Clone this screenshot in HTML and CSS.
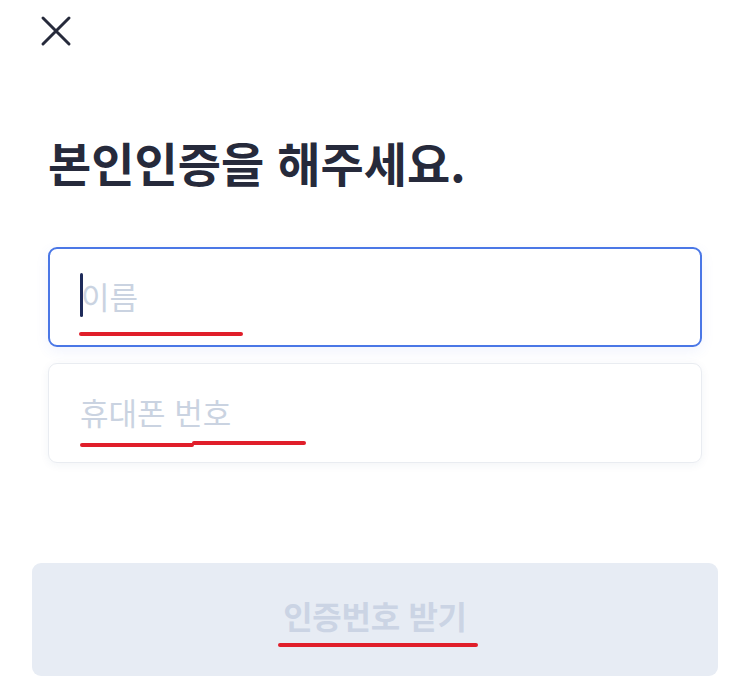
FILE: index.html
```
<!DOCTYPE html>
<html lang="ko">
<head>
    <meta charset="UTF-8">
    <meta name="viewport" content="width=device-width, initial-scale=1.0">
    <title>본인인증</title>
    <link rel="stylesheet" href="styles.css">
</head>
<body>

    <div class="top-bar">
        <button class="close-btn" aria-label="닫기">
            <svg width="32" height="32" viewBox="0 0 32 32">
                <path d="M3 3 L29 29 M29 3 L3 29" stroke="#262a3b" stroke-width="3" stroke-linecap="round" fill="none"/>
            </svg>
        </button>
    </div>

    <div class="content">
        <h1 class="title">본인인증을 해주세요.</h1>

        <div class="field field-active">
            <span class="caret"></span>
            <span class="placeholder">이름</span>
            <span class="mark mark-name"></span>
        </div>

        <div class="field">
            <span class="placeholder">휴대폰 번호</span>
            <span class="mark mark-phone-a"></span>
            <span class="mark mark-phone-b"></span>
        </div>
    </div>

    <div class="bottom">
        <button class="submit-btn">
            인증번호 받기
            <span class="mark mark-btn"></span>
        </button>
    </div>

</body>
</html>
```

FILE: styles.css
```
body {
    margin: 0;
    background: #ffffff;
    font-family: "Noto Sans CJK KR", "Noto Sans", sans-serif;
    color: #262a3b;
}
.top-bar {
    padding: 14px 0 0 39px;
    height: 62px;
}
.close-btn {
    background: none;
    border: none;
    padding: 0;
    width: 34px;
    height: 34px;
    display: flex;
    align-items: center;
    justify-content: center;
}
.content {
    padding: 0 48px;
}
.title {
    margin: 56px 0 0 0;
    font-size: 47px;
    font-weight: 700;
    line-height: 60px;
    letter-spacing: 0;
}
.field {
    position: relative;
    height: 98px;
    border: 1px solid #e9ecf1;
    border-radius: 9px;
    box-shadow: 0 2px 10px rgba(40, 60, 120, 0.06);
    display: flex;
    align-items: center;
    padding-left: 31px;
    margin-top: 16px;
}
.field-active {
    margin-top: 55px;
    border: 2px solid #4a77e6;
    height: 96px;
    padding-left: 30px;
    box-shadow: 0 4px 14px rgba(60, 100, 230, 0.08);
}
.placeholder {
    font-size: 31px;
    color: #cad3e1;
    letter-spacing: 0;
    margin-top: -4px;
}
.caret {
    width: 3px;
    height: 44px;
    border-radius: 2px;
    background: #1e2b5a;
    margin-top: -4px;
}
.field-active .placeholder {
    margin-left: -2px;
}
.mark {
    position: absolute;
    height: 4px;
    border-radius: 2px;
    background: #e01e2a;
}
.mark-name {
    left: 29px;
    top: 83px;
    width: 164px;
}
.mark-phone-a {
    left: 31px;
    top: 79px;
    width: 114px;
}
.mark-phone-b {
    left: 143px;
    top: 77px;
    width: 114px;
}
.bottom {
    padding: 0 32px;
    margin-top: 100px;
}
.submit-btn {
    position: relative;
    width: 100%;
    height: 113px;
    border: none;
    border-radius: 9px;
    background: #e7ecf4;
    font-family: "Noto Sans CJK KR", "Noto Sans", sans-serif;
    font-size: 32px;
    font-weight: 700;
    color: #cbd4e4;
    letter-spacing: -0.3px;
    padding-bottom: 10px;
}
.mark-btn {
    left: 246px;
    top: 80px;
    width: 200px;
}
```
